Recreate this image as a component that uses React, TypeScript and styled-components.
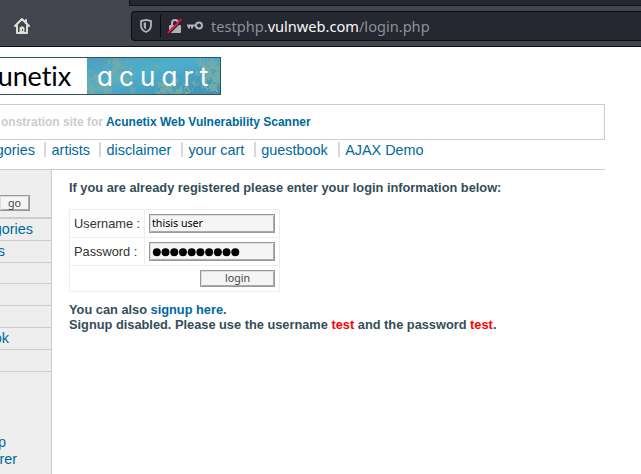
import React from "react";
import styled, { createGlobalStyle } from "styled-components";

const GlobalStyle = createGlobalStyle`
  * { box-sizing: border-box; }
  html, body { margin: 0; padding: 0; background: #fff; overflow: hidden; }
  body { font-family: "Liberation Sans", Arial, sans-serif; color: #333; }
`;

const Window = styled.div`
  width: 641px;
  height: 474px;
  overflow: hidden;
  background: #fff;
`;

const Toolbar = styled.header`
  height: 47px;
  display: flex;
  background: #42454d;
  border-bottom: 1px solid #0e0f14;
`;

const HomeArea = styled.div`
  width: 129px;
  flex: none;
  padding: 17px 0 0 13px;
  line-height: 0;
`;

const AddressArea = styled.div`
  flex: 1;
  display: flex;
  flex-direction: column;
`;

const TabStrip = styled.div`
  height: 6px;
  background: #23252f;
  border-left: 1px solid #111218;
  border-bottom: 1px solid #111218;
`;

const AddressBar = styled.div`
  display: flex;
  align-items: center;
  height: 30px;
  margin: 5px 0 0 2px;
  background: #252731;
  border: 1px solid #0c0d12;
  border-right: 0;
  border-radius: 4px 0 0 4px;
`;

const BarIcon = styled.span<{ $left: number }>`
  display: flex;
  flex: none;
  margin-left: ${(p) => p.$left}px;
`;

const Separator = styled.span`
  width: 1px;
  height: 22px;
  margin-left: 7px;
  background: #0a0b10;
`;

const Url = styled.span`
  margin-left: 7px;
  color: #8e9096;
  font: 14.6px/20px "Noto Sans", sans-serif;
  white-space: nowrap;
  strong { color: #f9f9fa; font-weight: 400; }
`;

const Logo = styled.div`
  display: flex;
  width: 221px;
  height: 38px;
  margin-top: 10px;
  border: 1px solid #36525d;
  border-left: 0;
`;

const LogoWord = styled.div`
  width: 87px;
  height: 36px;
  overflow: hidden;
  display: flex;
  justify-content: flex-end;
  padding-right: 16px;
  color: #000;
  font: 27px/36px Lato, sans-serif;
  letter-spacing: -0.1px;
`;

const LogoArt = styled.div`
  display: grid;
  width: 133px;
  height: 36px;
  overflow: hidden;
  > * { grid-area: 1 / 1; }
`;

const ArtWord = styled.span`
  padding-left: 10px;
  color: #fff;
  font: 26px/37px Inter, sans-serif;
  font-feature-settings: "cv11" 1;
  letter-spacing: 6.1px;
  white-space: nowrap;
  z-index: 1;
`;

const SiteInfo = styled.div`
  width: 605px;
  height: 36px;
  margin-top: 9px;
  padding-left: 1px;
  border: 1px solid #ccc;
  border-left: 0;
  color: #ccc;
  font-size: 12px;
  font-weight: 700;
  line-height: 34px;
  white-space: nowrap;
`;

const Link = styled.a`
  color: #00699c;
  text-decoration: none;
`;

const Nav = styled.nav`
  display: flex;
  width: 605px;
  height: 30px;
  padding-top: 1px;
  border-bottom: 1px solid #ccc;
  font-size: 14.4px;
  line-height: 18px;
  white-space: nowrap;
`;

const NavItem = styled(Link)<{ $width: number }>`
  width: ${(p) => p.$width}px;
  flex: none;
`;

const NavClipped = styled(NavItem)`
  display: flex;
  justify-content: flex-end;
  padding-right: 9px;
`;

const NavBar = styled.span`
  width: 7.6px;
  flex: none;
  height: 15px;
  margin-top: 1px;
  border-left: 2px solid #d8d8dc;
`;

const Body = styled.div`
  display: flex;
  height: 304px;
`;

const Sidebar = styled.aside`
  width: 52px;
  flex: none;
  background: #eee;
  border-right: 1px solid #ccc;
  font-size: 14.4px;
  overflow: hidden;
`;

const SearchArea = styled.div`
  height: 49px;
  padding-top: 25px;
  border-bottom: 2px solid #ccc;
`;

const Button = styled.button<{ $width: number; $height: number }>`
  display: block;
  width: ${(p) => p.$width}px;
  height: ${(p) => p.$height}px;
  padding: 0 0 1px;
  border: 1px solid #999;
  box-shadow: inset 1px 1px #ddd, inset -1px -1px #aaa;
  border-radius: 0;
  background: #f5f5f5;
  color: #444;
  font: 10.67px/12px "Noto Sans", sans-serif;
`;

const GoButton = styled(Button)`
  border-left: 0;
  padding-right: 0;
`;

const SideRow = styled.div<{ $height: number; $right: number }>`
  display: flex;
  justify-content: flex-end;
  height: ${(p) => p.$height}px;
  padding-right: ${(p) => p.$right}px;
  line-height: 20px;
  border-bottom: 1px solid #ccc;
`;

const SideLinks = styled.div`
  margin-top: 62px;
  line-height: 17px;
`;

const SideLink = styled(Link)<{ $right: number }>`
  display: flex;
  justify-content: flex-end;
  padding-right: ${(p) => p.$right}px;
`;

const Content = styled.main`
  padding: 10px 0 0 17px;
  color: #36525d;
`;

const Message = styled.h3`
  margin: 0;
  color: #344d58;
  font-size: 12.8px;
  line-height: 15px;
  white-space: nowrap;
`;

const Form = styled.form`
  display: grid;
  grid-template-columns: 74px 134px;
  grid-template-rows: 27px 27px 25px;
  gap: 1px;
  width: 211px;
  margin: 14px 0 10px;
  padding: 1px;
  background: #eee;
`;

const Cell = styled.div<{ $wide?: boolean }>`
  display: flex;
  align-items: center;
  justify-content: ${(p) => (p.$wide ? "flex-end" : "flex-start")};
  grid-column: ${(p) => (p.$wide ? "1 / -1" : "auto")};
  padding: 0 4px;
  background: #fff;
  color: #333;
  font-size: 12.8px;
  white-space: nowrap;
`;

const Input = styled.input`
  width: 126px;
  height: 19px;
  padding: 0 2px 1px;
  border: 1px solid #999;
  box-shadow: inset 1px 1px #ddd, inset -1px -1px #aaa;
  border-radius: 0;
  background: #f5f5f5;
  color: #000;
  font: 10.67px "Noto Sans", sans-serif;
`;

const DotField = styled.div`
  display: flex;
  align-items: center;
  width: 126px;
  height: 19px;
  padding-left: 2px;
  border: 1px solid #999;
  box-shadow: inset 1px 1px #ddd, inset -1px -1px #aaa;
  background: #f5f5f5;
`;

const Test = styled.span`
  color: #f00;
`;

const PasswordDots = () => (
  <svg width="90" height="10" viewBox="0 0 90 10">
    {Array.from({ length: 10 }, (_, i) => (
      <circle key={i} cx={4.8 + i * 8.72} cy="5.2" r="4" />
    ))}
  </svg>
);

const HomeIcon = () => (
  <svg width="18" height="18" viewBox="0 0 18 18" fill="none" stroke="#deded9" strokeWidth="2" strokeLinejoin="round" strokeLinecap="round">
    <path d="M2 9 9 2l7 7M4 8v8h10V8" />
    <path d="M13 3v3" />
    <path d="M7 16v-5q0-1 1-1h2q1 0 1 1v5z" fill="#deded9" strokeWidth="1" />
    <path d="M9.5 12.5v1" stroke="#42454d" strokeWidth="1" />
  </svg>
);

const ShieldIcon = () => (
  <svg width="14" height="16" viewBox="0 0 14 16" fill="none">
    <path d="M7 1.8 12 3v4c0 3.2-1.8 5.8-5 7-3.2-1.2-5-3.8-5-7V3z" stroke="#b2b3b8" strokeWidth="1.8" strokeLinejoin="round" />
    <path d="M7 4.2 4.6 4.8V7c0 2 .8 3.5 2.4 4.5z" fill="#b2b3b8" />
  </svg>
);

const LockIcon = () => (
  <svg width="16" height="16" viewBox="0 0 16 16" fill="none">
    <path d="M5 8V5a3 3 0 0 1 6 0v3" stroke="#b2b3b8" strokeWidth="2" />
    <rect x="2" y="7" width="12" height="8" rx="1.2" fill="#b2b3b8" />
    <path d="M2.2 15.6 15.4 2.6" stroke="#252731" strokeWidth="1.4" />
    <path d="M1.3 14.4 14 1.7" stroke="#ed0b3d" strokeWidth="1.8" strokeLinecap="round" />
  </svg>
);

const KeyIcon = () => (
  <svg width="18" height="12" viewBox="0 0 18 12" fill="none" stroke="#b2b3b8" strokeWidth="2">
    <circle cx="13" cy="5.5" r="3" />
    <path d="M10 5.5H1M3 5.5v3M6 5.5v3" />
  </svg>
);

/* Branches of the fractal banner, as clusters of small squares. */
const branches: [number, number, number][] = [
  [2, 24, 5], [9, 20, 5], [14, 28, 6], [5, 32, 6], [20, 33, 5], [1, 15, 3], [24, 27, 3],
  [28, 2, 5], [31, 8, 6], [26, 14, 5], [35, 16, 4], [40, 4, 4], [29, 20, 4], [44, 11, 3], [21, 5, 3],
  [38, 25, 4], [43, 20, 3], [46, 31, 3], [68, 10, 3], [65, 14, 2],
  [76, 25, 5], [81, 30, 7], [87, 24, 5], [73, 34, 5], [92, 33, 5], [84, 18, 3], [98, 28, 3],
  [102, 34, 4], [115, 5, 5], [120, 11, 6], [127, 7, 7], [123, 19, 6], [130, 23, 7], [116, 21, 4],
  [126, 31, 6], [118, 29, 4], [110, 14, 3], [108, 25, 3], [132, 14, 6],
];

const Fractal = () => (
  <svg width="133" height="36" viewBox="0 0 133 36">
    <defs>
      <linearGradient id="sea" x1="0" y1="0" x2="1" y2="1">
        <stop offset="0" stopColor="#4f9fba" />
        <stop offset=".4" stopColor="#4eafcc" />
        <stop offset="1" stopColor="#3f8fb2" />
      </linearGradient>
      <filter id="ragged" x="-5%" y="-10%" width="110%" height="120%" colorInterpolationFilters="sRGB">
        <feTurbulence type="fractalNoise" baseFrequency=".27" numOctaves="3" seed="8" result="noise" />
        <feDisplacementMap in="SourceGraphic" in2="noise" scale="12" xChannelSelector="R" yChannelSelector="G" />
      </filter>
    </defs>
    <rect width="133" height="36" fill="url(#sea)" />
    <g filter="url(#ragged)" fill="#70aca9">
      {branches.map(([x, y, r], i) => (
        <rect key={i} x={x - r * 0.7} y={y - r * 0.65} width={r * 1.45} height={r * 1.3} />
      ))}
    </g>
  </svg>
);

export default function App() {
  return (
    <Window>
      <GlobalStyle />
      <Toolbar>
        <HomeArea><HomeIcon /></HomeArea>
        <AddressArea>
          <TabStrip />
          <AddressBar>
            <BarIcon $left={7}><ShieldIcon /></BarIcon>
            <Separator />
            <BarIcon $left={6}><LockIcon /></BarIcon>
            <BarIcon $left={3}><KeyIcon /></BarIcon>
            <Url>testphp.<strong>vulnweb.com</strong>/login.php</Url>
          </AddressBar>
        </AddressArea>
      </Toolbar>
      <Logo>
        <LogoWord>unetix</LogoWord>
        <LogoArt><Fractal /><ArtWord>acuart</ArtWord></LogoArt>
      </Logo>
      <SiteInfo>onstration site for <Link>Acunetix Web Vulnerability Scanner</Link></SiteInfo>
      <Nav>
        <NavClipped $width={44}>gories</NavClipped><NavBar />
        <NavItem $width={47.3}>artists</NavItem><NavBar />
        <NavItem $width={74.3}>disclaimer</NavItem><NavBar />
        <NavItem $width={65.3}>your cart</NavItem><NavBar />
        <NavItem $width={76.3}>guestbook</NavItem><NavBar />
        <NavItem $width={80}>AJAX Demo</NavItem>
      </Nav>
      <Body>
        <Sidebar>
          <SearchArea><GoButton type="button" $width={30} $height={16}>go</GoButton></SearchArea>
          <SideRow $height={22} $right={18}><Link>gories</Link></SideRow>
          <SideRow $height={22} $right={46}><Link>s</Link></SideRow>
          <SideRow $height={21} $right={0} />
          <SideRow $height={22} $right={0} />
          <SideRow $height={22} $right={0} />
          <SideRow $height={22} $right={42}><Link>ok</Link></SideRow>
          <SideRow $height={22} $right={0} />
          <SideLinks>
            <SideLink $right={45}>p</SideLink>
            <SideLink $right={34}>rer</SideLink>
          </SideLinks>
        </Sidebar>
        <Content>
          <Message>If you are already registered please enter your login information below:</Message>
          <Form>
            <Cell>Username :</Cell>
            <Cell><Input defaultValue="thisis user" /></Cell>
            <Cell>Password :</Cell>
            <Cell>
              <DotField><PasswordDots /></DotField>
            </Cell>
            <Cell $wide><Button type="button" $width={75} $height={17}>login</Button></Cell>
          </Form>
          <Message>
            You can also <Link>signup here</Link>.<br />
            Signup disabled. Please use the username <Test>test</Test> and the password <Test>test</Test>.
          </Message>
        </Content>
      </Body>
    </Window>
  );
}
